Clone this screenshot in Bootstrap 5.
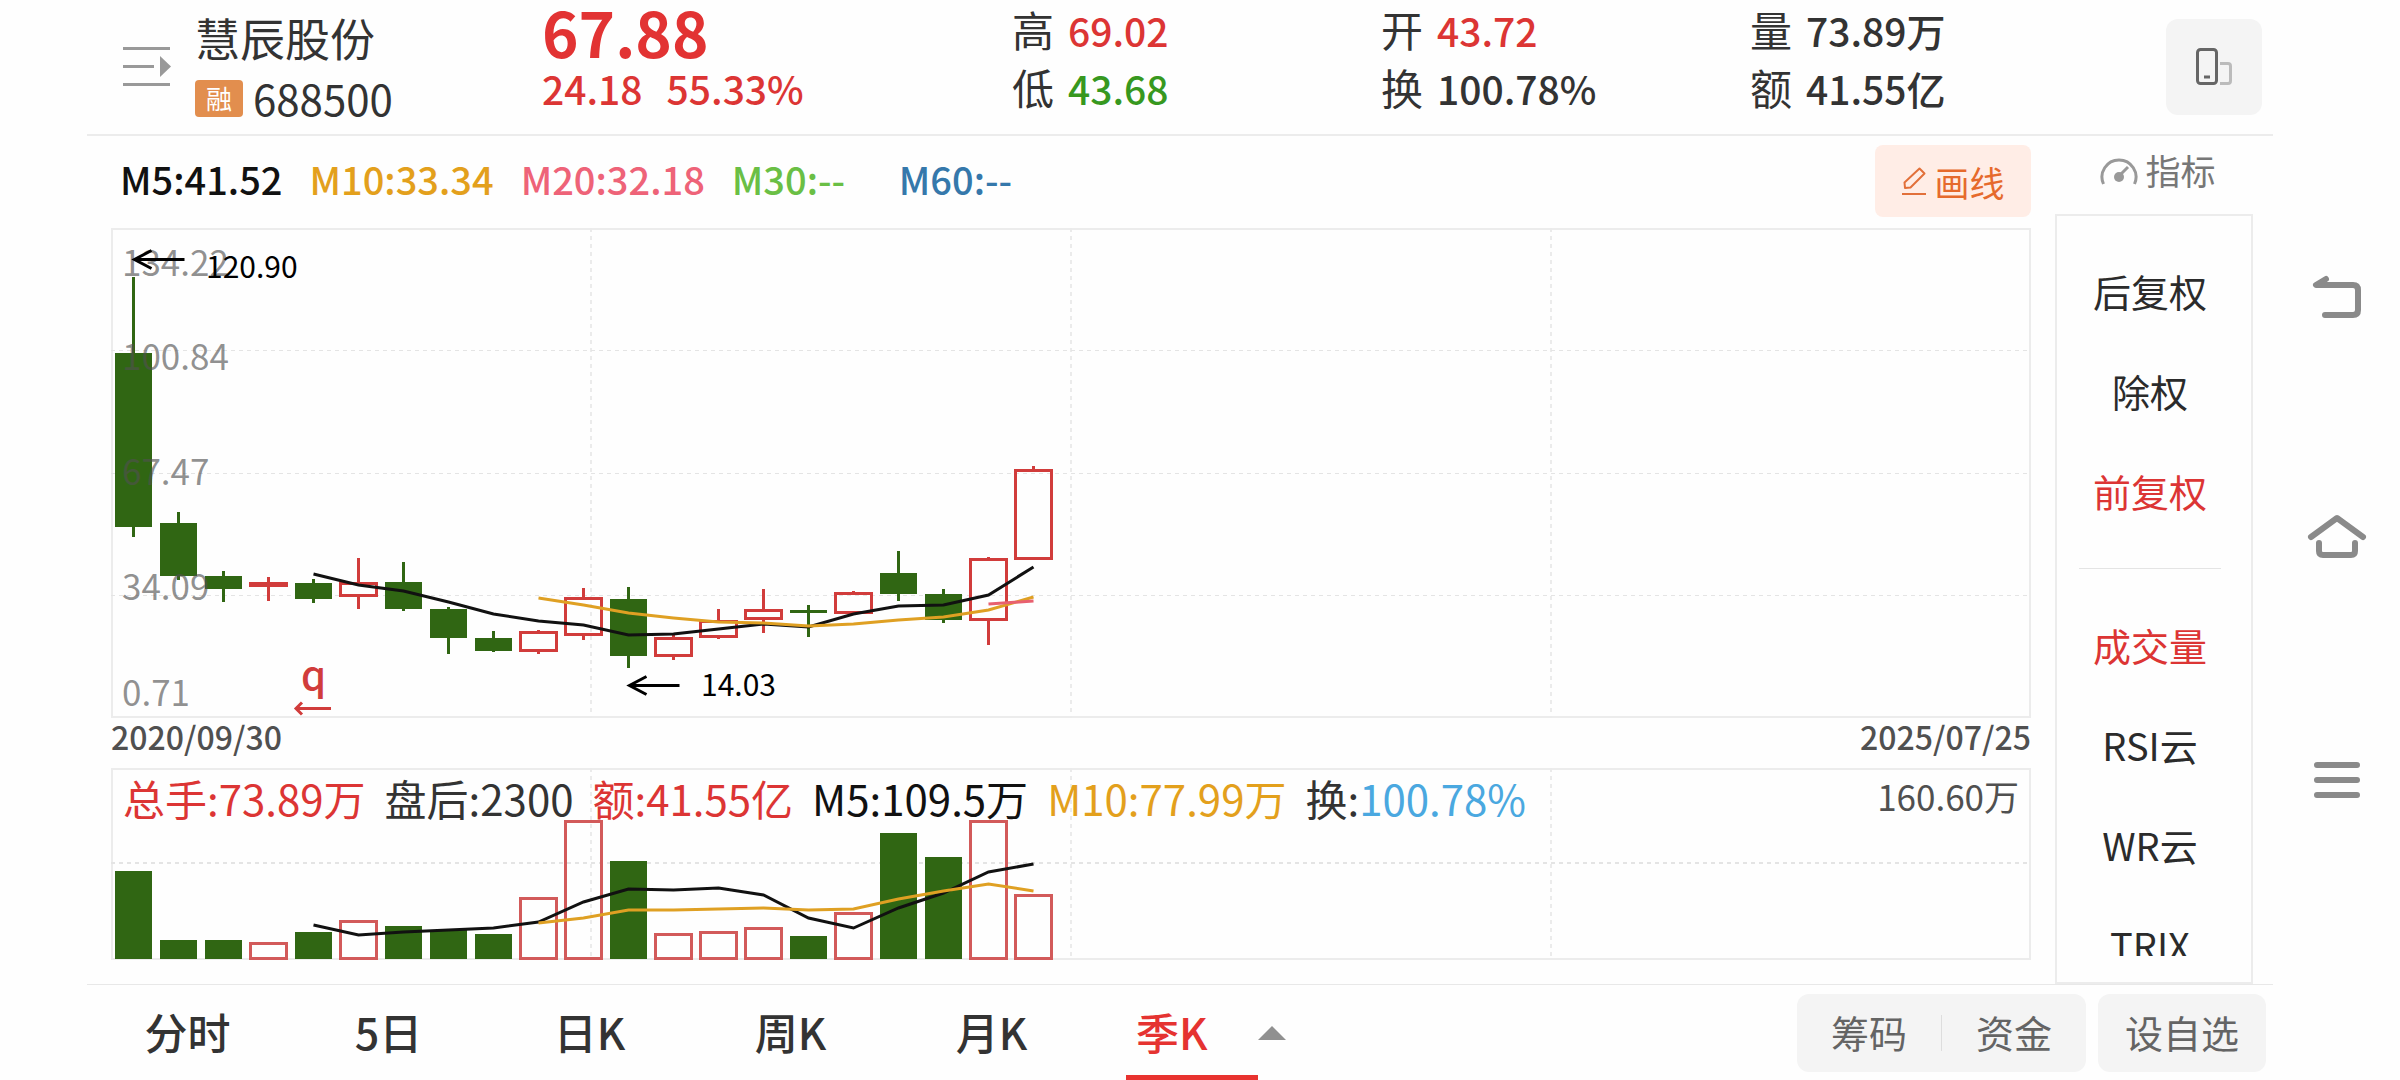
<!DOCTYPE html>
<html lang="zh-CN">
<head>
<meta charset="utf-8">
<meta name="viewport" content="width=device-width, initial-scale=1">
<title>慧辰股份 688500</title>
<link href="https://cdn.jsdelivr.net/npm/bootstrap@5.3.0/dist/css/bootstrap.min.css" rel="stylesheet">
<style>
  :root { --up: #dc3534; --down: #37981f; --ink: #333; --rule: #ececec; --soft: #f4f4f4; }
  body { font-family: "Noto Sans CJK SC", "Noto Sans", sans-serif; color: var(--ink); background: #fefefe; }
  .stage { padding-left: 87px; }
  .c-up { color: var(--up); }
  .c-down { color: var(--down); }
  .c-ma5 { color: #111; }
  .c-ma10 { color: #e3a01c; }
  .c-ma20 { color: #ee6378; }
  .c-ma30 { color: #6abf45; }
  .c-ma60 { color: #3578ab; }
  .c-rate { color: #4aa8e0; }

  .quote-bar { height: 136px; border-bottom: 2px solid var(--rule); padding: 0 11px 0 36px; }
  .menu-toggle { margin: 42px 24px 0 0; }
  .stock-box { width: 347px; padding-top: 8px; }
  .stock-name { font-size: 45px; line-height: 60px; }
  .stock-code { font-size: 42px; line-height: 60px; gap: 10px; }
  .margin-tag { width: 48px; height: 37px; border-radius: 4px; background: #e28e4e; color: #fff; font-size: 26px; line-height: 36px; text-align: center; }
  .price-box { width: 470px; }
  .price-now { font-size: 62px; line-height: 62px; color: #e23333; }
  .price-diff { font-size: 39px; line-height: 52px; gap: 24px; }
  .stat-box { width: 369px; font-size: 39px; line-height: 58px; }
  .stat-box > div { height: 58px; }
  .stat-label { font-size: 42px; margin-right: 14px; }
  .flip-btn { width: 96px; height: 96px; margin-top: 19px; border-radius: 12px; background: var(--soft); }

  .chart-col { padding: 0 24px; }
  .ma-row { height: 92px; padding-left: 9px; font-size: 38px; gap: 27px; padding-bottom: 2px; }
  .ma-row > span { min-width: 140px; line-height: 56px; padding-bottom: 4px; }
  .draw-btn { width: 156px; height: 72px; border-radius: 8px; background: #ffede6; color: #e66a2c; font-size: 35px; line-height: 1; gap: 7px; }
  .plot { display: block; width: 100%; height: auto; }
  .date-row { height: 50px; font-size: 32px; line-height: 36px; color: #505050; }
  .vol-info { position: absolute; top: 0; left: 12px; right: 12px; font-size: 42px; line-height: 59px; gap: 19px; }
  .vol-max { font-size: 35px; line-height: 55px; color: #505050; }

  .side-col { width: 198px; margin-right: 20px; }
  .index-btn { height: 78px; font-size: 35px; line-height: 1; color: #777; gap: 7px; }
  .index-panel { border: 2px solid var(--rule); height: 770px; padding-bottom: 26px; }
  .index-scroll { height: 100%; overflow: hidden; padding-top: 25px; }
  .index-item { flex: none; height: 100px; padding-right: 8px; font-size: 38px; line-height: 1; color: #2b2b2b; text-decoration: none; }
  .index-item.active { color: var(--up); }
  .index-rule { flex: none; height: 1px; margin: 27px 30px 26px 22px; background: #e4e4e4; }

  .period-bar { height: 97px; border-top: 1px solid #e8e8e8; padding-right: 7px; }
  .period-tab { width: 201px; height: 96px; padding-bottom: 4px; font-size: 43px; color: var(--ink); text-decoration: none; }
  .period-tab.active { color: #e53331; width: auto; padding: 0 0 0 34px; }
  .active .period-inner { width: 132px; padding-left: 10px; border-bottom: 6px solid #e8322f; padding-top: 2px; }
  .tool-group, .tool-single { height: 78px; border-radius: 12px; background: var(--soft); }
  .tool-group { width: 289px; }
  .tool-split { width: 1px; height: 36px; background: #ddd; }
  .tool-btn { font-size: 38px; line-height: 1; color: #646464; padding: 0 0 3px; }
  .tool-single { width: 168px; }

  .sys-nav { width: 127px; padding-top: 268px; gap: 186px; }
  .sys-nav .btn { width: 60px; height: 56px; }
</style>
<script src="https://cdn.jsdelivr.net/npm/bootstrap@5.3.0/dist/js/bootstrap.bundle.min.js"></script>
</head>
<body>
<div class="d-flex min-vh-100 stage">
  <div class="flex-grow-1 d-flex flex-column">

    <header class="quote-bar d-flex align-items-start">
      <button class="btn border-0 p-0 menu-toggle" type="button" aria-label="股票列表">
        <svg class="d-block" width="48" height="48" viewBox="0 0 48 48"><path d="M0 6.500H47M0 24.500H31M0 42.500H47" stroke="#999" stroke-width="3" fill="none"/><path d="M37 14L48 24.500L37 35Z" fill="#999"/></svg>
      </button>
      <div class="stock-box">
        <div class="stock-name">慧辰股份</div>
        <div class="stock-code d-flex align-items-center"><span class="margin-tag">融</span><span>688500</span></div>
      </div>
      <div class="price-box">
        <div class="price-now fw-bold">67.88</div>
        <div class="price-diff d-flex fw-medium c-up"><span>24.18</span><span>55.33%</span></div>
      </div>
      <div class="stat-box">
        <div><span class="stat-label">高</span><span class="fw-medium c-up">69.02</span></div>
        <div><span class="stat-label">低</span><span class="fw-medium c-down">43.68</span></div>
      </div>
      <div class="stat-box">
        <div><span class="stat-label">开</span><span class="fw-medium c-up">43.72</span></div>
        <div><span class="stat-label">换</span><span class="fw-medium">100.78%</span></div>
      </div>
      <div class="stat-box">
        <div><span class="stat-label">量</span><span class="fw-medium">73.89万</span></div>
        <div><span class="stat-label">额</span><span class="fw-medium">41.55亿</span></div>
      </div>
      <button class="btn border-0 p-0 flip-btn ms-auto d-flex align-items-center justify-content-center" type="button" aria-label="竖屏">
        <svg width="38" height="38" viewBox="0 0 38 38" fill="none"><rect x="2.500" y="1.500" width="19" height="34" rx="3" stroke="#666" stroke-width="3"/><path d="M9 29H15" stroke="#666" stroke-width="3"/><path d="M25 15.500H33Q35.500 15.500 35.500 18V33Q35.500 35.500 33 35.500H25" stroke="#bbb" stroke-width="3"/></svg>
      </button>
    </header>

    <main class="flex-grow-1 d-flex">
      <section class="chart-col flex-grow-1">
        <div class="ma-row d-flex align-items-center fw-medium">
          <span class="c-ma5">M5:41.52</span>
          <span class="c-ma10">M10:33.34</span>
          <span class="c-ma20">M20:32.18</span>
          <span class="c-ma30">M30:--</span>
          <span class="c-ma60">M60:--</span>
          <button class="btn border-0 p-0 draw-btn ms-auto d-flex align-items-center justify-content-center" type="button">
            <svg width="26" height="30" viewBox="0 0 26 30" fill="none" stroke="#e2703a" stroke-width="2" stroke-linejoin="round"><path d="M1 28H25M4 22L3.500 16.500L18.500 2.500L23.500 7.500L9.500 21.500Z"/></svg>
            <span>画线</span>
          </button>
        </div>
        <svg class="plot" id="kline" viewBox="0 0 1920 490" role="img" aria-label="季K线图"></svg>
        <div class="date-row d-flex justify-content-between fw-medium"><span>2020/09/30</span><span>2025/07/25</span></div>
        <div class="position-relative">
          <svg class="plot" id="volume" viewBox="0 0 1920 192" role="img" aria-label="成交量图"></svg>
          <div class="vol-info d-flex text-nowrap">
            <span class="c-up">总手:73.89万</span>
            <span>盘后:2300</span>
            <span class="c-up">额:41.55亿</span>
            <span class="c-ma5">M5:109.5万</span>
            <span class="c-ma10">M10:77.99万</span>
            <span>换:<span class="c-rate">100.78%</span></span>
            <span class="vol-max ms-auto">160.60万</span>
          </div>
        </div>
      </section>

      <aside class="side-col flex-shrink-0">
        <button class="btn border-0 rounded-0 w-100 index-btn pt-0 pb-2 ps-2 pe-0 d-flex align-items-center justify-content-center" type="button">
          <svg width="38" height="30" viewBox="0 0 38 30" fill="none" stroke="#999"><path d="M3.500 28A17 17 0 1 1 34.500 28" stroke-width="3"/><path d="M19 20L28 11" stroke-width="3"/><circle cx="19" cy="21" r="5" fill="#999" stroke="none"/></svg>
          <span class="pb-1">指标</span>
        </button>
        <div class="index-panel">
          <nav class="index-scroll d-flex flex-column">
            <a href="#" class="index-item d-flex align-items-center justify-content-center">后复权</a>
            <a href="#" class="index-item d-flex align-items-center justify-content-center">除权</a>
            <a href="#" class="index-item d-flex align-items-center justify-content-center active">前复权</a>
            <div class="index-rule"></div>
            <a href="#" class="index-item d-flex align-items-center justify-content-center active">成交量</a>
            <a href="#" class="index-item d-flex align-items-center justify-content-center">RSI云</a>
            <a href="#" class="index-item d-flex align-items-center justify-content-center">WR云</a>
            <a href="#" class="index-item d-flex align-items-center justify-content-center">TRIX</a>
          </nav>
        </div>
      </aside>
    </main>

    <footer class="period-bar d-flex align-items-center">
      <nav class="d-flex fw-medium">
        <a href="#" class="period-tab d-flex align-items-center justify-content-center">分时</a>
        <a href="#" class="period-tab d-flex align-items-center justify-content-center">5日</a>
        <a href="#" class="period-tab d-flex align-items-center justify-content-center">日K</a>
        <a href="#" class="period-tab d-flex align-items-center justify-content-center">周K</a>
        <a href="#" class="period-tab d-flex align-items-center justify-content-center">月K</a>
        <a href="#" class="period-tab d-flex active" aria-current="page"><span class="period-inner d-flex align-items-center">季K</span></a>
      </nav>
      <svg width="28" height="14" viewBox="0 0 28 14" class="me-auto"><path d="M0 14L14 0L28 14Z" fill="#909090"/></svg>
      <div class="tool-group d-flex align-items-center me-2">
        <button class="btn border-0 tool-btn flex-fill" type="button">筹码</button>
        <span class="tool-split"></span>
        <button class="btn border-0 tool-btn flex-fill" type="button">资金</button>
      </div>
      <button class="btn border-0 tool-btn tool-single ms-1" type="button">设自选</button>
    </footer>
  </div>

  <nav class="sys-nav flex-shrink-0 d-flex flex-column align-items-center" aria-label="系统导航">
    <button class="btn border-0 p-0" type="button" aria-label="返回"><svg class="d-block" width="60" height="56" viewBox="0 0 60 56" fill="none" stroke="#8a8a8a" stroke-width="6" stroke-linecap="round" stroke-linejoin="round"><path d="M19 11L9 17H46Q51 17 51 22V42Q51 47 46 47H18"/></svg></button>
    <button class="btn border-0 p-0" type="button" aria-label="主页"><svg class="d-block" width="60" height="56" viewBox="0 0 60 56" fill="none" stroke="#8a8a8a" stroke-width="6" stroke-linecap="round" stroke-linejoin="round"><path d="M4 27L30 8L56 27M12 33V41Q12 45 16 45H44Q48 45 48 41V33"/></svg></button>
    <button class="btn border-0 p-0" type="button" aria-label="菜单"><svg class="d-block" width="60" height="56" viewBox="0 0 60 56" fill="none" stroke="#8a8a8a" stroke-width="6" stroke-linecap="round"><path d="M10 13H50M10 28H50M10 43H50"/></svg></button>
  </nav>
</div>

<script>
  const GREEN = '#306613', RED = '#d13c3b', STEP = 45, FIRST = 22.5;
  const cx = i => FIRST + STEP * i;
  const line = (x1, y1, x2, y2, attrs) => `<line x1="${x1}" y1="${y1}" x2="${x2}" y2="${y2}" ${attrs}/>`;
  const curve = (start, ys, color) => `<polyline fill="none" stroke="${color}" stroke-width="3" points="${ys.map((y, k) => cx(start + k) + ',' + y).join(' ')}"/>`;
  const grid = (h, rows, rowWidth) => {
    let s = `<rect x="1" y="1" width="1918" height="${h - 2}" fill="none" stroke="#ececec" stroke-width="2"/>`;
    [480, 960, 1440].forEach(x => s += line(x, 0, x, h, 'stroke="#ebebeb" stroke-width="2" stroke-dasharray="4 4"'));
    rows.forEach(y => s += line(0, y, 1920, y, `stroke="#e4e4e4" stroke-width="${rowWidth}" stroke-dasharray="4 4"`));
    return s;
  };
  const arrow = (x, y, len, dx, dy, color) =>
    `<path d="M${x + len} ${y}H${x + 1}M${x + dx} ${y - dy}L${x + 1} ${y}L${x + dx} ${y + dy}" fill="none" stroke="${color}" stroke-width="3"/>`;

  // direction, wick top, body top, body bottom, wick bottom
  const candles = [
    ['d', 49, 125, 299, 309], ['d', 284, 295, 348, 352], ['d', 343, 348, 361, 374], ['u', 349, 354, 359, 373],
    ['d', 351, 355, 371, 375], ['u', 330, 354, 369, 381], ['d', 334, 354, 381, 383], ['d', 379, 381, 410, 426],
    ['d', 403, 410, 423, 424], ['u', 402, 403, 424, 426], ['u', 360, 369, 408, 412], ['d', 359, 371, 428, 440],
    ['u', 405, 409, 429, 432], ['u', 381, 392, 410, 411], ['u', 361, 381, 392, 405], ['d', 377, 382, 385, 409],
    ['u', 363, 364, 386, 386], ['d', 323, 345, 366, 373], ['d', 361, 366, 392, 395], ['u', 329, 330, 393, 417],
    ['u', 238, 241, 332, 332]
  ];
  let k = grid(490, [122.5, 245.5, 367.5], 1);
  candles.forEach(([dir, hi, top, bottom, lo], i) => {
    const x = cx(i), up = dir === 'u', color = up ? RED : GREEN;
    const wick = `stroke="${color}" stroke-width="3"`;
    k += line(x, hi, x, top + 1, wick) + line(x, bottom - 1, x, lo, wick);
    k += up
      ? `<rect x="${x - 18}" y="${top + 1.5}" width="36" height="${bottom - top - 3}" fill="none" stroke="${color}" stroke-width="3"/>`
      : `<rect x="${x - 18.5}" y="${top}" width="37" height="${bottom - top}" fill="${color}"/>`;
  });
  k += curve(4, [346, 357, 363, 374, 386, 393, 397, 407, 406, 401, 396, 399, 386, 378, 377, 367, 339], '#111');
  k += curve(9, [370, 377, 385, 390, 394, 395, 398, 396, 392, 389, 382, 369], '#dfa023');
  k += curve(19, [376, 373], '#e8606f');
  [['134.22', 48], ['100.84', 142], ['67.47', 257], ['34.09', 372], ['0.71', 478]].forEach(([t, y]) =>
    k += `<text x="11" y="${y}" font-size="35" fill="#505050" fill-opacity=".63">${t}</text>`);
  k += arrow(FIRST, 31.5, 51, 18, 9, '#000') + '<text x="95" y="50" font-size="30">120.90</text>';
  k += arrow(cx(11), 457.5, 51, 18, 9, '#000') + '<text x="590" y="468" font-size="30">14.03</text>';
  k += `<text x="190" y="462" font-size="40" font-weight="500" fill="${RED}">q</text>` + arrow(184, 480.5, 36, 7, 6, RED);
  document.getElementById('kline').innerHTML = k;

  // direction, bar top
  const bars = [['d', 103], ['d', 172], ['d', 172], ['u', 174], ['d', 164], ['u', 152], ['d', 158], ['d', 162], ['d', 166],
    ['u', 129], ['u', 52], ['d', 93], ['u', 165], ['u', 163], ['u', 159], ['d', 168], ['u', 144], ['d', 65], ['d', 89], ['u', 52], ['u', 126]];
  let v = grid(192, [95], 2);
  bars.forEach(([dir, top], i) => {
    const x = cx(i);
    v += dir === 'u'
      ? `<rect x="${x - 18}" y="${top + 1.5}" width="36" height="${189 - top}" fill="none" stroke="#d25a5a" stroke-width="3"/>`
      : `<rect x="${x - 18.5}" y="${top}" width="37" height="${191 - top}" fill="${GREEN}"/>`;
  });
  v += curve(4, [157, 167, 164, 162, 160, 154, 134, 121, 122, 120, 127, 150, 160, 140, 125, 104, 96], '#111');
  v += curve(9, [155, 150, 142, 142, 141, 140, 142, 141, 131, 123, 116, 123], '#dfa023');
  document.getElementById('volume').innerHTML = v;
</script>
</body>
</html>
